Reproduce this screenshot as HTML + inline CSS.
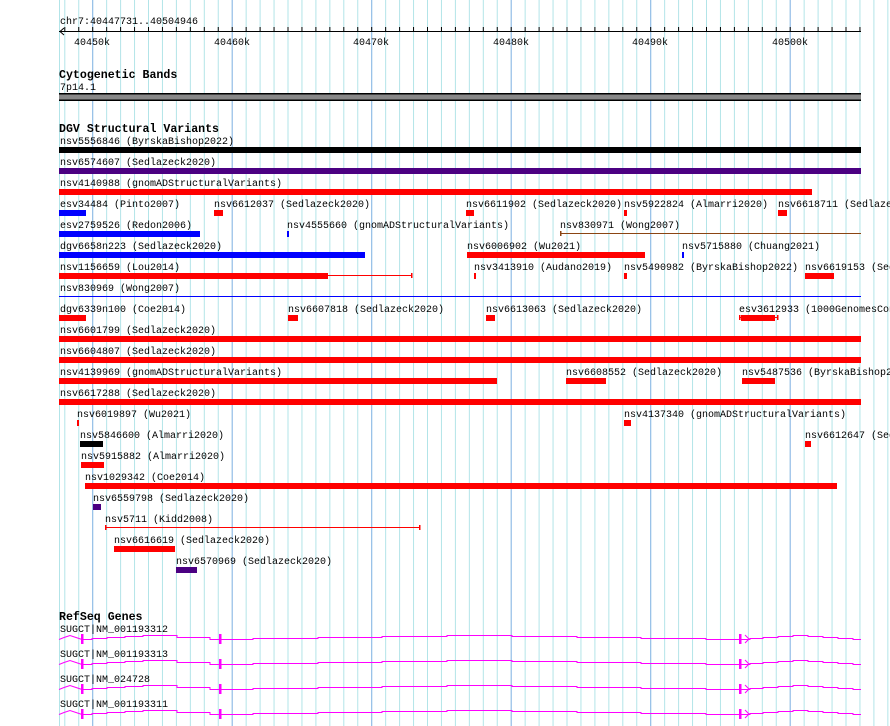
<!DOCTYPE html>
<html><head><meta charset="utf-8"><style>
html,body{margin:0;padding:0;background:#fff;width:890px;height:726px;overflow:hidden}
svg{display:block}
text{font-family:"Liberation Mono",monospace;font-size:10px;fill:#000}
.b{font-weight:bold;font-size:11.6px}
</style></head><body>
<svg width="890" height="726" viewBox="0 0 890 726" xmlns="http://www.w3.org/2000/svg">
<defs>
<pattern id="mn" patternUnits="userSpaceOnUse" x="64.3" y="0" width="13.95" height="726"><rect x="0" y="0" width="1" height="726" fill="#b2e4e8"/></pattern>
<pattern id="mj" patternUnits="userSpaceOnUse" x="92.2" y="0" width="139.5" height="726"><rect x="0" y="0" width="1" height="726" fill="#8cb6e6"/></pattern>
<pattern id="tk" patternUnits="userSpaceOnUse" x="64.3" y="0" width="13.95" height="726"><rect x="0" y="27" width="1" height="5" fill="#000"/></pattern>
</defs>
<rect x="59" y="0" width="831" height="726" fill="url(#mn)"/>
<rect x="59" y="0" width="831" height="726" fill="url(#mj)"/>
<rect x="59" y="0" width="1" height="726" fill="#b2e4e8"/>

<!-- ruler -->
<text x="60" y="24">chr7:40447731..40504946</text>
<rect x="59" y="31" width="802" height="1" fill="#000"/>
<rect x="64" y="0" width="797" height="40" fill="url(#tk)"/>
<path d="M64 28 L60 31.5 L64 35" stroke="#000" fill="none"/>
<text x="74" y="45">40450k</text>
<text x="214" y="45">40460k</text>
<text x="353" y="45">40470k</text>
<text x="493" y="45">40480k</text>
<text x="632" y="45">40490k</text>
<text x="772" y="45">40500k</text>

<!-- cyto -->
<text class="b" x="59" y="78">Cytogenetic Bands</text>
<text x="60" y="90">7p14.1</text>
<rect x="59" y="93" width="802" height="8" fill="#000"/>
<rect x="59" y="94.5" width="802" height="5" fill="#888"/>

<!-- DGV -->
<text class="b" x="59" y="132">DGV Structural Variants</text>
<g>
<text x="60" y="144">nsv5556846 (ByrskaBishop2022)</text>
<rect x="59" y="147" width="802" height="6" fill="#000"/>
<text x="60" y="165">nsv6574607 (Sedlazeck2020)</text>
<rect x="59" y="168" width="802" height="6" fill="#4b0082"/>
<text x="60" y="186">nsv4140988 (gnomADStructuralVariants)</text>
<rect x="59" y="189" width="753" height="6" fill="#f00"/>

<text x="60" y="207">esv34484 (Pinto2007)</text>
<rect x="59" y="210" width="27" height="6" fill="#00f"/>
<text x="214" y="207">nsv6612037 (Sedlazeck2020)</text>
<rect x="214" y="210" width="9" height="6" fill="#f00"/>
<text x="466" y="207">nsv6611902 (Sedlazeck2020)</text>
<rect x="466" y="210" width="8" height="6" fill="#f00"/>
<text x="624" y="207">nsv5922824 (Almarri2020)</text>
<rect x="624" y="210" width="3" height="6" fill="#f00"/>
<text x="778" y="207">nsv6618711 (Sedlazeck2020)</text>
<rect x="778" y="210" width="9" height="6" fill="#f00"/>

<text x="60" y="228">esv2759526 (Redon2006)</text>
<rect x="59" y="231" width="141" height="6" fill="#00f"/>
<text x="287" y="228">nsv4555660 (gnomADStructuralVariants)</text>
<rect x="287" y="231" width="2" height="6" fill="#00f"/>
<text x="560" y="228">nsv830971 (Wong2007)</text>
<rect x="560" y="233" width="301" height="1" fill="#8b4513"/>
<rect x="560" y="231" width="1.5" height="5" fill="#8b4513"/>

<text x="60" y="249">dgv6658n223 (Sedlazeck2020)</text>
<rect x="59" y="252" width="306" height="6" fill="#00f"/>
<text x="467" y="249">nsv6006902 (Wu2021)</text>
<rect x="467" y="252" width="178" height="6" fill="#f00"/>
<text x="682" y="249">nsv5715880 (Chuang2021)</text>
<rect x="682" y="252" width="2" height="6" fill="#00f"/>

<text x="60" y="270">nsv1156659 (Lou2014)</text>
<rect x="59" y="273" width="269" height="6" fill="#f00"/>
<rect x="328" y="275" width="84" height="1" fill="#f00"/>
<rect x="411" y="273" width="1.5" height="5" fill="#f00"/>
<text x="474" y="270">nsv3413910 (Audano2019)</text>
<rect x="474" y="273" width="2" height="6" fill="#f00"/>
<text x="624" y="270">nsv5490982 (ByrskaBishop2022)</text>
<rect x="624" y="273" width="3" height="6" fill="#f00"/>
<text x="805" y="270">nsv6619153 (Sedlazeck2020)</text>
<rect x="805" y="273" width="29" height="6" fill="#f00"/>

<text x="60" y="291">nsv830969 (Wong2007)</text>
<rect x="59" y="296" width="802" height="1" fill="#00f"/>

<text x="60" y="312">dgv6339n100 (Coe2014)</text>
<rect x="59" y="315" width="27" height="6" fill="#f00"/>
<text x="288" y="312">nsv6607818 (Sedlazeck2020)</text>
<rect x="288" y="315" width="10" height="6" fill="#f00"/>
<text x="486" y="312">nsv6613063 (Sedlazeck2020)</text>
<rect x="486" y="315" width="9" height="6" fill="#f00"/>
<text x="739" y="312">esv3612933 (1000GenomesConsortium)</text>
<rect x="741" y="315" width="34" height="6" fill="#f00"/>
<rect x="739" y="317" width="39" height="1" fill="#f00"/>
<rect x="739" y="315" width="1.5" height="5" fill="#f00"/>
<rect x="777" y="315" width="1.5" height="5" fill="#f00"/>

<text x="60" y="333">nsv6601799 (Sedlazeck2020)</text>
<rect x="59" y="336" width="802" height="6" fill="#f00"/>
<text x="60" y="354">nsv6604807 (Sedlazeck2020)</text>
<rect x="59" y="357" width="802" height="6" fill="#f00"/>

<text x="60" y="375">nsv4139969 (gnomADStructuralVariants)</text>
<rect x="59" y="378" width="438" height="6" fill="#f00"/>
<text x="566" y="375">nsv6608552 (Sedlazeck2020)</text>
<rect x="566" y="378" width="40" height="6" fill="#f00"/>
<text x="742" y="375">nsv5487536 (ByrskaBishop2022)</text>
<rect x="742" y="378" width="33" height="6" fill="#f00"/>

<text x="60" y="396">nsv6617288 (Sedlazeck2020)</text>
<rect x="59" y="399" width="802" height="6" fill="#f00"/>

<text x="77" y="417">nsv6019897 (Wu2021)</text>
<rect x="77" y="420" width="2" height="6" fill="#f00"/>
<text x="624" y="417">nsv4137340 (gnomADStructuralVariants)</text>
<rect x="624" y="420" width="7" height="6" fill="#f00"/>

<text x="80" y="438">nsv5846600 (Almarri2020)</text>
<rect x="80" y="441" width="23" height="6" fill="#000"/>
<text x="805" y="438">nsv6612647 (Sedlazeck2020)</text>
<rect x="805" y="441" width="6" height="6" fill="#f00"/>

<text x="81" y="459">nsv5915882 (Almarri2020)</text>
<rect x="81" y="462" width="23" height="6" fill="#f00"/>

<text x="85" y="480">nsv1029342 (Coe2014)</text>
<rect x="85" y="483" width="752" height="6" fill="#f00"/>

<text x="93" y="501">nsv6559798 (Sedlazeck2020)</text>
<rect x="93" y="504" width="8" height="6" fill="#4b0082"/>

<text x="105" y="522">nsv5711 (Kidd2008)</text>
<rect x="105" y="527" width="315" height="1" fill="#f00"/>
<rect x="105" y="525" width="1.5" height="5" fill="#f00"/>
<rect x="419" y="525" width="1.5" height="5" fill="#f00"/>

<text x="114" y="543">nsv6616619 (Sedlazeck2020)</text>
<rect x="114" y="546" width="61" height="6" fill="#f00"/>

<text x="176" y="564">nsv6570969 (Sedlazeck2020)</text>
<rect x="176" y="567" width="21" height="6" fill="#4b0082"/>
</g>

<!-- RefSeq -->
<text class="b" x="59" y="620">RefSeq Genes</text>
<defs>
<g id="gene">
<path fill="none" stroke="#ff00ff" stroke-width="1" d="M59 639.5 L64 637.5 L70 635.5 L76 637.5 L82 639.5 H92 V638.5 H107 V637.5 H125 V636.5 H143 V635.5 H177 V637.5 H210 V639.5 H253 V638.5 H318 V637.5 H382 V636.5 H447 V635.5 H512 V636.5 H577 V637.5 H641 V638.5 H706 V639.5 H750 V638.5 H763 V637.5 H778 V636.5 H793 V635.5 H808 V636.5 H823 V637.5 H838 V638.5 H853 V639.5 H861"/>
<rect x="81" y="634" width="2.5" height="10" fill="#f0f"/>
<rect x="219" y="634" width="2.5" height="10" fill="#f0f"/>
<rect x="739" y="634" width="2.5" height="10" fill="#f0f"/>
<path d="M745 635 L749 639 L745 643" stroke="#f0f" fill="none"/>
</g>
</defs>
<text x="60" y="632">SUGCT|NM_001193312</text>
<use href="#gene"/>
<text x="60" y="657">SUGCT|NM_001193313</text>
<use href="#gene" y="25"/>
<text x="60" y="682">SUGCT|NM_024728</text>
<use href="#gene" y="50"/>
<text x="60" y="707">SUGCT|NM_001193311</text>
<use href="#gene" y="75"/>
</svg>
</body></html>
